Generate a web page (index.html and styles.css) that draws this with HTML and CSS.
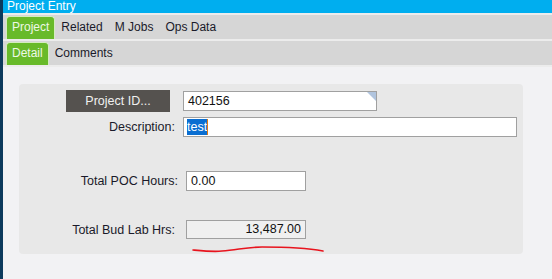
FILE: index.html
```html
<!DOCTYPE html>
<html lang="en">
<head>
    <meta charset="UTF-8">
    <title>Project Entry</title>
    <link rel="stylesheet" href="styles.css">
</head>
<body>
    <div class="edge"></div>
    <div class="window">
        <div class="title-bar">Project Entry</div>
        <div class="tab-bar">
            <div class="tab active">Project</div>
            <div class="tab">Related</div>
            <div class="tab">M Jobs</div>
            <div class="tab">Ops Data</div>
        </div>
        <div class="tab-bar">
            <div class="tab active">Detail</div>
            <div class="tab">Comments</div>
        </div>

        <div class="content">
            <div class="panel">
                <div class="row row-id">
                    <div class="label"><button class="lookup">Project ID...</button></div>
                    <div class="field field-id">402156</div>
                </div>
                <div class="row row-desc">
                    <div class="label">Description:</div>
                    <div class="field field-desc"><span class="selected">test</span><span class="caret"></span></div>
                </div>
                <div class="row row-poc">
                    <div class="label">Total POC Hours:</div>
                    <div class="field field-num">0.00</div>
                </div>
                <div class="row row-bud">
                    <div class="label">Total Bud Lab Hrs:</div>
                    <div class="field field-num readonly">13,487.00</div>
                </div>
            </div>
            <svg class="scribble" width="140" height="10" viewBox="0 0 140 10">
                <path d="M1 6 C 12 7, 22 8, 30 7 C 45 6, 55 3, 70 3 C 95 3, 115 4, 131 7" fill="none" stroke="#e8141e" stroke-width="1.6" stroke-linecap="round"/>
            </svg>
        </div>
    </div>
</body>
</html>
```

FILE: styles.css
```css
body {
    margin: 0;
    display: flex;
    height: 279px;
    overflow: hidden;
    font-family: "Liberation Sans", Arial, sans-serif;
    font-size: 12px;
    color: #1a1a2a;
    background-color: #f2f2f4;
}

.edge {
    width: 3px;
    background-color: #0c3a5c;
}

.window {
    flex: 1;
    display: flex;
    flex-direction: column;
}

.title-bar {
    height: 13px;
    line-height: 12px;
    padding-left: 4px;
    color: #ffffff;
    background-color: #00aeef;
    border-bottom: 2px solid #ececec;
}

.tab-bar {
    display: flex;
    align-items: flex-end;
    height: 24px;
    padding-left: 3px;
    background-color: #d6d6d6;
    border-bottom: 2px solid #ececec;
}

.tab {
    height: 23px;
    line-height: 23px;
    padding: 0 6px;
    box-sizing: border-box;
}

.tab.active {
    color: #eef8e6;
    background-color: #68ba2a;
    border: 1px solid #d4ecc0;
    border-bottom: none;
    border-radius: 4px 4px 0 0;
    line-height: 21px;
    padding: 0 5px;
}

.content {
    position: relative;
    flex: 1;
    padding: 17px 29px 0 16px;
}

.panel {
    background-color: #e8e8e8;
    border-radius: 4px;
    padding: 6px 0 15px 0;
    display: flex;
    flex-direction: column;
    font-size: 12.5px;
}

.row {
    display: flex;
    align-items: center;
}

.label {
    width: 156px;
    margin-right: 8px;
    text-align: right;
    display: flex;
    justify-content: flex-end;
}

.row-id {
    height: 22px;
}

.row-desc {
    height: 20px;
    margin-top: 5px;
}

.row-poc {
    height: 20px;
    margin-top: 34px;
}

.row-bud {
    height: 19px;
    margin-top: 29px;
}

.row-poc .label,
.row-bud .label {
    width: 159px;
}

.row-bud .label {
    padding-right: 3px;
    box-sizing: border-box;
}

.lookup {
    width: 104px;
    height: 22px;
    margin-right: 5px;
    border: none;
    background-color: #55524f;
    color: #f0f0f0;
    font-family: inherit;
    font-size: 12.5px;
    padding: 0;
}

.field {
    position: relative;
    height: 20px;
    line-height: 18px;
    box-sizing: border-box;
    border: 1px solid #a0a0a0;
    background-color: #ffffff;
    padding: 0 4px;
    color: #111111;
}

.field-id {
    width: 194px;
}

.field-id::after {
    content: "";
    position: absolute;
    top: 0;
    right: 0;
    border-top: 9px solid #b0c4de;
    border-left: 9px solid transparent;
}

.field-desc {
    width: 334px;
    padding-left: 3px;
    display: flex;
    align-items: center;
}

.selected {
    background-color: #0a6ed1;
    color: #ffffff;
    line-height: 16px;
}

.caret {
    width: 1px;
    height: 16px;
    background-color: #e07a10;
}

.field-num {
    width: 120px;
}

.readonly {
    height: 19px;
    line-height: 17px;
    background-color: #f0f0f0;
    text-align: right;
}

.scribble {
    position: absolute;
    left: 189px;
    top: 177px;
}
```
